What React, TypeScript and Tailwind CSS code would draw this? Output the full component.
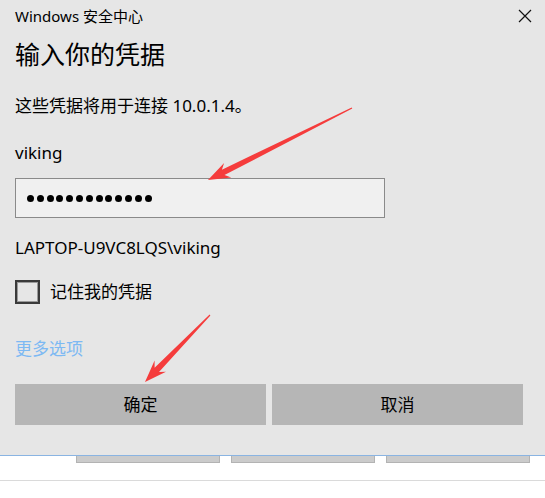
import React from "react"

const FONT = {
  fontFamily: '"Noto Sans", "Noto Sans CJK SC", sans-serif',
}

function CloseIcon() {
  return (
    <svg width="14" height="14" viewBox="0 0 14 14" aria-hidden="true">
      <path d="M1 1 L13 13 M13 1 L1 13" stroke="#111" strokeWidth="1.2" fill="none" />
    </svg>
  )
}

function Arrows() {
  return (
    <svg
      className="pointer-events-none absolute left-0 top-0"
      width="545"
      height="498"
      viewBox="0 0 545 498"
      aria-hidden="true"
    >
      <polygon
        fill="#f53c3c"
        points="352.3,108.5 224.5,175.1 231.3,177.4 208,180 224.1,163 221.9,169.7 351.7,107.5"
      />
      <polygon
        fill="#f53c3c"
        points="210.4,315.4 159,371.9 166,371.8 145,382 154.6,360.6 154.6,367.7 209.6,314.6"
      />
    </svg>
  )
}

export default function App() {
  const dots = Array.from({ length: 13 })

  return (
    <div className="relative h-[498px] w-[545px] overflow-hidden bg-white text-black" style={FONT}>
      <div className="h-[456px] border-b border-[#8ab4e2] bg-[#e6e6e6] px-[15px]">
        <div className="flex items-start justify-between pt-[7px]">
          <div className="text-[15px] leading-[18px]">Windows 安全中心</div>
          <div className="mr-[-2px] mt-[2px]">
            <CloseIcon />
          </div>
        </div>

        <div className="mt-[12px] text-[25px] leading-[34px]">输入你的凭据</div>

        <div className="mt-[23px] text-[17px] leading-[24px]">这些凭据将用于连接 10.0.1.4。</div>

        <div className="mt-[23px] text-[17px] leading-[24px]">viking</div>

        <div className="mt-[13px] flex h-[40px] w-[370px] items-center border border-[#8a8a8a] bg-[#f0f0f0] pl-[11px]">
          <div className="flex gap-[2.8px]">
            {dots.map((_, i) => (
              <span key={i} className="block h-[7px] w-[7px] rounded-full bg-black" />
            ))}
          </div>
        </div>

        <div className="mt-[18px] text-[17px] leading-[24px]">LAPTOP-U9VC8LQS\viking</div>

        <div className="mt-[20px] flex h-[24px] items-center gap-[10px]">
          <span className="block h-[24px] w-[25px] border-2 border-[#3a3a3a] shadow-[inset_0_0_0_1px_#9a9a9a]" />
          <span className="text-[17px] leading-[24px]">记住我的凭据</span>
        </div>

        <div className="mt-[33px] text-[17px] leading-[24px] text-[#7db9f3]">更多选项</div>

        <div className="mt-[23px] flex gap-[6px]">
          <button className="flex h-[41px] w-[251px] items-center justify-center bg-[#b6b6b6] text-[17px]">
            确定
          </button>
          <button className="flex h-[41px] w-[251px] items-center justify-center bg-[#b6b6b6] text-[17px]">
            取消
          </button>
        </div>
      </div>

      <div className="flex gap-[11px] pl-[76px]">
        <div className="h-[7px] w-[144px] border border-t-0 border-[#b3b3b3] bg-[#cbcbcb]" />
        <div className="h-[7px] w-[144px] border border-t-0 border-[#b3b3b3] bg-[#cbcbcb]" />
        <div className="h-[7px] w-[144px] border border-t-0 border-[#b3b3b3] bg-[#cbcbcb]" />
      </div>
      <div className="mt-[17px] h-px bg-[#dadada]" />

      <Arrows />
    </div>
  )
}
